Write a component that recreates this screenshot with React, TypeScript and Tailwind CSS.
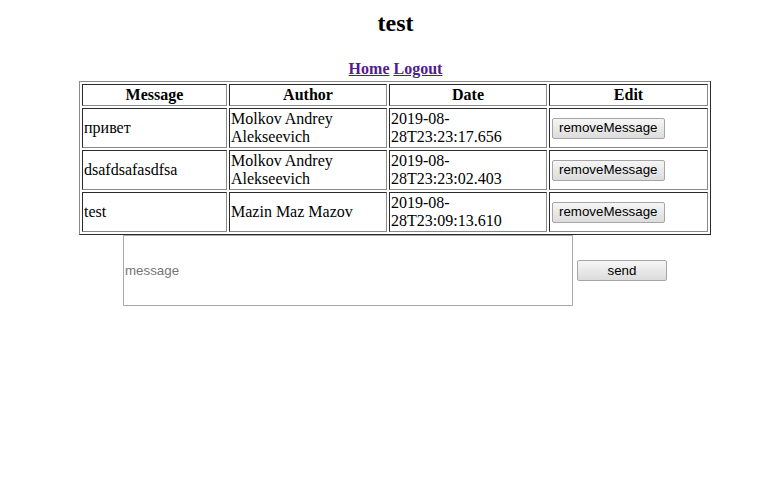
const messages = [
  { text: "привет", author: "Molkov Andrey Alekseevich", date: "2019-08-28T23:23:17.656" },
  { text: "dsafdsafasdfsa", author: "Molkov Andrey Alekseevich", date: "2019-08-28T23:23:02.403" },
  { text: "test", author: "Mazin Maz Mazov", date: "2019-08-28T23:09:13.610" },
];

const cell =
  "p-px border border-t-[#2b2b2b] border-l-[#2b2b2b] border-b-[#8a8a8a] border-r-[#8a8a8a] align-middle";

const btn =
  "h-[21px] px-[6px] text-[13.33px] leading-none text-black rounded-[2px] border border-[#a6a6a6] bg-gradient-to-b from-[#f6f6f6] to-[#dcdcdc]";

const App = () => {
  return (
    <div className="min-h-screen bg-white pl-[13px] text-black" style={{ fontFamily: '"Liberation Serif", serif' }}>
      <h1 className="pl-px pt-[9px] text-center text-[24px] leading-[28px] font-bold">test</h1>

      <div className="pl-px mt-[23px] text-center text-[16px] leading-[18px] font-bold">
        <a href="#" className="text-[#551A8B] underline">Home</a>{" "}
        <a href="#" className="text-[#551A8B] underline">Logout</a>
      </div>

      <table className="mx-auto mt-[3px] w-[632px] border-separate border-spacing-[2px] border border-t-[#8a8a8a] border-l-[#8a8a8a] border-b-[#2b2b2b] border-r-[#2b2b2b] text-[16px] leading-[18px]">
        <thead>
          <tr>
            <th className={cell + " w-[145px] text-center font-bold"}>Message</th>
            <th className={cell + " w-[158px] text-center font-bold"}>Author</th>
            <th className={cell + " w-[158px] text-center font-bold"}>Date</th>
            <th className={cell + " text-center font-bold"}>Edit</th>
          </tr>
        </thead>
        <tbody>
          {messages.map((m, i) => (
            <tr key={i}>
              <td className={cell + " h-[40px] text-left"}>{m.text}</td>
              <td className={cell + " text-left"}>{m.author}</td>
              <td className={cell + " text-left break-all"}>
                {m.date.slice(0, 8)}
                <br />
                {m.date.slice(8)}
              </td>
              <td className={cell + " text-left"}>
                <button className={btn + " ml-px"} style={{ fontFamily: '"Liberation Sans", Arial, sans-serif' }}>
                  removeMessage
                </button>
              </td>
            </tr>
          ))}
        </tbody>
      </table>

      <div className="flex items-center justify-center gap-[4px]" style={{ fontFamily: '"Liberation Sans", Arial, sans-serif' }}>
        <input
          placeholder="message"
          className="h-[71px] w-[450px] border border-[#a9a9a9] px-px text-[13.33px] placeholder:text-[#757575] outline-none"
        />
        <button className={btn + " w-[90px]"}>send</button>
      </div>
    </div>
  );
};

export default App;
